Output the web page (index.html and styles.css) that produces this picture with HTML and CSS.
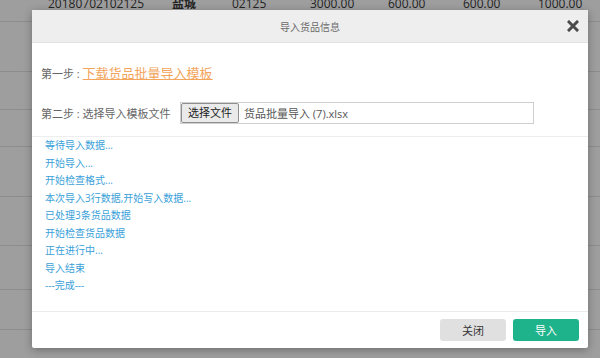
FILE: index.html
```html
<!DOCTYPE html>
<html lang="zh-CN">
<head>
<meta charset="utf-8">
<link rel="stylesheet" href="styles.css">
</head>
<body>
<div class="page">
  <div class="bg-table">
    <div class="bg-row first">
      <span class="c1">20180702102125</span>
      <span class="c2">盐城</span>
      <span class="c3">02125</span>
      <span class="c4">3000.00</span>
      <span class="c5">600.00</span>
      <span class="c6">600.00</span>
      <span class="c7">1000.00</span>
    </div>
    <div class="bg-row h50"></div>
    <div class="bg-row h38"></div>
    <div class="bg-row h37"></div>
    <div class="bg-row h50"></div>
    <div class="bg-row h49"></div>
    <div class="bg-row h44"></div>
    <div class="bg-row h40"></div>
  </div>
  <div class="overlay"></div>
  <div class="modal">
    <div class="modal-header">
      <span class="modal-title">导入货品信息</span>
      <span class="close">
        <svg width="12" height="12" viewBox="0 0 12 12"><path d="M2 2 L10 10 M10 2 L2 10" stroke="#4a4a4a" stroke-width="3" stroke-linecap="square"/></svg>
      </span>
    </div>
    <div class="modal-steps">
      <div class="step step-one">第一步 : <a class="dl-link" href="#">下载货品批量导入模板</a></div>
      <div class="step step-two">
        <span class="step-label">第二步 : 选择导入模板文件</span>
        <div class="file-box">
          <span class="file-btn">选择文件</span>
          <span class="file-name">货品批量导入 (7).xlsx</span>
        </div>
      </div>
    </div>
    <div class="log">
      <div>等待导入数据...</div>
      <div>开始导入...</div>
      <div>开始检查格式...</div>
      <div>本次导入3行数据,开始写入数据...</div>
      <div>已处理3条货品数据</div>
      <div>开始检查货品数据</div>
      <div>正在进行中...</div>
      <div>导入结束</div>
      <div>---完成---</div>
    </div>
    <div class="modal-footer">
      <button class="btn btn-close">关闭</button>
      <button class="btn btn-import">导入</button>
    </div>
  </div>
</div>
</body>
</html>
```
FILE: styles.css
```css
* { box-sizing: border-box; }
html, body {
  margin: 0;
  padding: 0;
  width: 600px;
  height: 358px;
  overflow: hidden;
  font-family: "Open Sans", "Noto Sans CJK SC", sans-serif;
}
.page {
  position: relative;
  width: 600px;
  height: 358px;
  background: #ffffff;
  overflow: hidden;
}
.bg-table {
  margin-top: -17px;
}
.bg-row {
  display: flex;
  border-bottom: 1px solid #e4e4e4;
  font-size: 12px;
  color: #3a3a3a;
}
.bg-row.first {
  height: 39px;
  align-items: center;
  padding-top: 2px;
}
.bg-row .c1 { padding-left: 48px; width: 172px; }
.bg-row .c2 { width: 60px; font-weight: bold; }
.bg-row .c3 { width: 78px; }
.bg-row .c4 { width: 78px; }
.bg-row .c5 { width: 75px; }
.bg-row .c6 { width: 75px; }
.bg-row .c7 { width: 60px; }
.h50 { height: 50px; }
.h49 { height: 49px; }
.h44 { height: 44px; }
.h40 { height: 40px; }
.h38 { height: 38px; }
.h37 { height: 37px; }
.overlay {
  position: absolute;
  inset: 0;
  background: rgba(0, 0, 0, 0.38);
}
.modal {
  position: absolute;
  left: 32px;
  top: 10px;
  width: 556px;
  height: 338px;
  background: #fff;
  display: flex;
  flex-direction: column;
  box-shadow: 0 2px 8px rgba(0, 0, 0, 0.3);
  border-radius: 2px;
  color: #676a6c;
}
.modal-header {
  height: 33px;
  background: #eeeeee;
  border-bottom: 1px solid #e2e2e2;
  display: flex;
  align-items: center;
  justify-content: center;
  position: relative;
}
.modal-title {
  font-size: 10px;
  color: #6a6a6a;
}
.close {
  position: absolute;
  right: 9px;
  top: 10px;
  width: 12px;
  height: 12px;
  display: flex;
}
.modal-steps {
  padding: 20px 0 12px 9px;
  border-bottom: 1px solid #eeeeee;
}
.step {
  font-size: 11px;
  color: #666;
}
.step-one {
  height: 20px;
  line-height: 20px;
}
.dl-link {
  font-size: 13px;
  color: #f3a55c;
  text-decoration: underline;
}
.step-two {
  margin-top: 19px;
  display: flex;
  align-items: center;
  height: 22px;
}
.step-label {
  width: 139px;
}
.file-box {
  width: 354px;
  height: 22px;
  border: 1px solid #cfcfcf;
  display: flex;
  align-items: center;
}
.file-btn {
  height: 20px;
  line-height: 18px;
  padding: 0 6px;
  background: #eaeaea;
  border: 1px solid #8f8f8f;
  border-radius: 2px;
  font-size: 11px;
  color: #222;
}
.file-name {
  margin-left: 5px;
  font-size: 11px;
  color: #555;
}
.log {
  height: 174px;
  padding: 0 0 0 13px;
  font-size: 10px;
  line-height: 17.5px;
  color: #3a9fd9;
}
.modal-footer {
  flex: 1;
  border-top: 1px solid #ececec;
  display: flex;
  justify-content: flex-end;
  align-items: flex-start;
  gap: 7px;
  padding: 7px 9px 0 0;
}
.btn {
  width: 66px;
  height: 22px;
  border: none;
  border-radius: 3px;
  font-family: "Open Sans", "Noto Sans CJK SC", sans-serif;
  font-size: 11px;
  padding: 0;
}
.btn-close {
  background: #e0e0e0;
  color: #333;
}
.btn-import {
  background: #1fb38c;
  color: #fff;
}
```
